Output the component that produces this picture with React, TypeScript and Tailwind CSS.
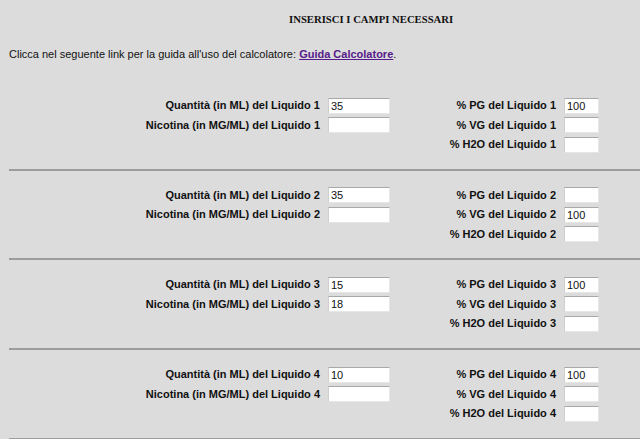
const liquids = [
  { n: 1, qty: '35', nic: '', pg: '100', vg: '', h2o: '' },
  { n: 2, qty: '35', nic: '', pg: '', vg: '100', h2o: '' },
  { n: 3, qty: '15', nic: '18', pg: '100', vg: '', h2o: '' },
  { n: 4, qty: '10', nic: '', pg: '100', vg: '', h2o: '' },
];

function Field({ value, wide }: { value: string; wide?: boolean }) {
  return (
    <input
      type="text"
      defaultValue={value}
      className={`${wide ? 'w-[62px]' : 'w-[35px]'} h-[16px] bg-white border border-[#e6e6e6] border-t-[#a8a8a8] border-l-[#cfcfcf] px-[2px] text-[11px] leading-[14px] text-[#111] outline-none font-['Liberation_Sans',Arial,sans-serif]`}
    />
  );
}

function Row({
  left,
  right,
}: {
  left?: { label: string; value: string };
  right: { label: string; value: string };
}) {
  return (
    <div className="flex h-[16px] items-center">
      <div className="flex w-[390px] items-center justify-end gap-[8px]">
        {left && (
          <>
            <span className="font-bold whitespace-nowrap">{left.label}</span>
            <Field value={left.value} wide />
          </>
        )}
      </div>
      <div className="flex w-[209px] items-center justify-end gap-[8px]">
        <span className="font-bold whitespace-nowrap">{right.label}</span>
        <Field value={right.value} />
      </div>
    </div>
  );
}

export default function App() {
  return (
    <div className="min-h-screen w-full overflow-hidden bg-[#dcdcdc] text-[11px] leading-[13px] text-[#111] font-['Liberation_Sans',Arial,sans-serif]">
      {/* Header */}
      <div className="pl-[289px] pt-[13px]">
        <h1 className="font-['Liberation_Serif','Times_New_Roman',serif] text-[10.7px] font-bold leading-[13px] whitespace-nowrap">
          INSERISCI I CAMPI NECESSARI
        </h1>
      </div>
      <p className="mt-[22px] pl-[9px] whitespace-nowrap">
        Clicca nel seguente link per la guida all'uso del calcolatore:{' '}
        <a href="#" className="font-bold text-[#551a8b] underline">
          Guida Calcolatore
        </a>
        .
      </p>

      {/* Liquids */}
      <div className="mt-[36.5px]">
        {liquids.map((l) => (
          <div key={l.n}>
            <div className="flex flex-col gap-[3.5px]">
              <Row
                left={{ label: `Quantità (in ML) del Liquido ${l.n}`, value: l.qty }}
                right={{ label: `% PG del Liquido ${l.n}`, value: l.pg }}
              />
              <Row
                left={{ label: `Nicotina (in MG/ML) del Liquido ${l.n}`, value: l.nic }}
                right={{ label: `% VG del Liquido ${l.n}`, value: l.vg }}
              />
              <Row right={{ label: `% H2O del Liquido ${l.n}`, value: l.h2o }} />
            </div>
            <div className="ml-[9px] mt-[16px] mb-[16.7px] h-[2px] bg-[#9c9c9c]" />
          </div>
        ))}
      </div>
    </div>
  );
}
